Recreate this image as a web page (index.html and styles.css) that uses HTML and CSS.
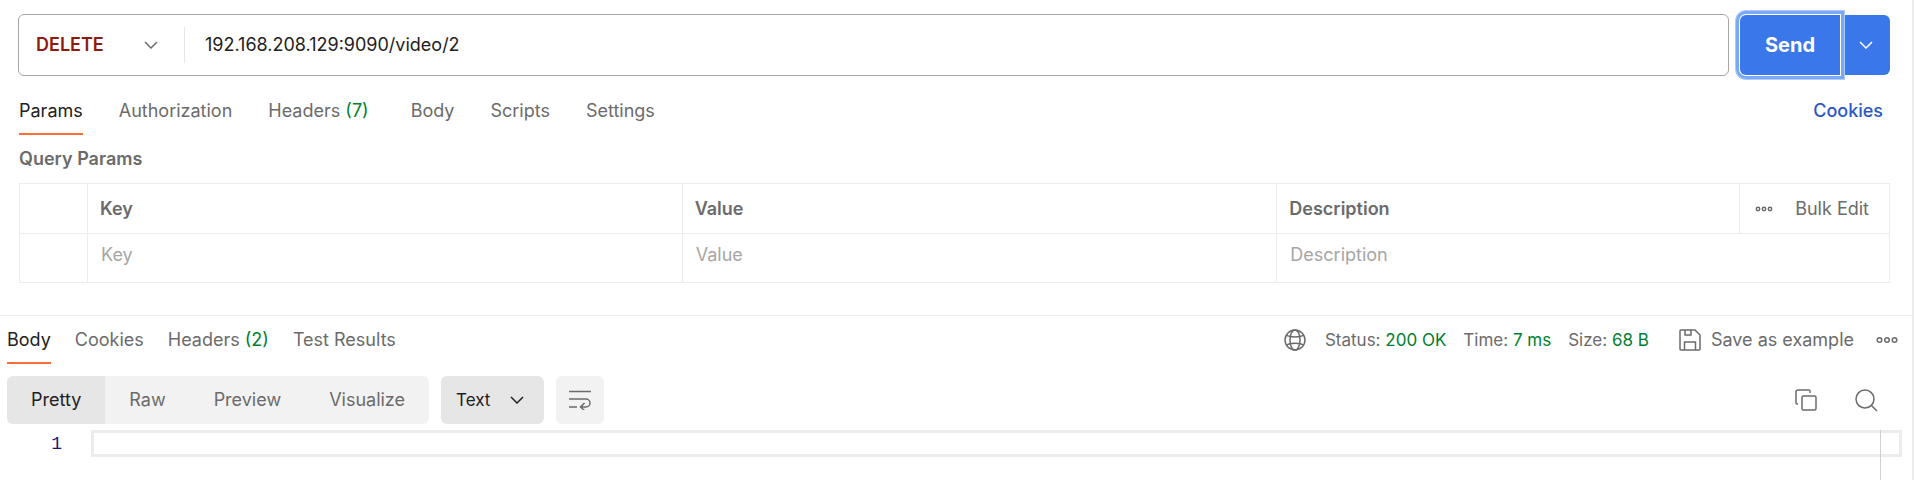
FILE: index.html
```html
<!doctype html>
<html lang="en">
<head>
<meta charset="utf-8">
<title>DELETE 192.168.208.129:9090/video/2</title>
<link rel="stylesheet" href="styles.css">
</head>
<body>
<main class="request">
	<form class="url-bar">
		<div class="url-box">
			<div class="select-wrap method">
				<select aria-label="Method">
					<option>DELETE</option>
				</select>
				<svg class="chevron" width="14" height="8" viewBox="0 0 14 8"><path d="M1 1l6 6 6-6"/></svg>
			</div>
			<input class="url" type="text" aria-label="Request URL" value="192.168.208.129:9090/video/2">
		</div>
		<div class="send-group">
			<button class="send" type="button">Send</button>
			<button class="send-more" type="button" aria-label="Send options">
				<svg width="14" height="8" viewBox="0 0 14 8"><path d="M1 1l6 6 6-6"/></svg>
			</button>
		</div>
	</form>
	<nav class="tabs">
		<a class="tab active" href="#params">Params</a>
		<a class="tab" href="#auth">Authorization</a>
		<a class="tab with-count" href="#headers">Headers <span class="count">(7)</span></a>
		<a class="tab" href="#body">Body</a>
		<a class="tab" href="#scripts">Scripts</a>
		<a class="tab" href="#settings">Settings</a>
		<a class="cookies" href="#cookies">Cookies</a>
	</nav>
	<h2 class="title">Query Params</h2>
	<table class="params">
		<colgroup>
			<col class="col-check">
			<col class="col-key">
			<col class="col-key">
			<col>
			<col class="col-tools">
		</colgroup>
		<thead>
			<tr>
				<th></th>
				<th>Key</th>
				<th>Value</th>
				<th>Description</th>
				<td class="tools">
					<div class="tools-row">
						<button type="button" aria-label="More columns">
							<svg width="18" height="6" viewBox="0 0 18 6"><circle cx="3" cy="3" r="1.7"/><circle cx="9" cy="3" r="1.7"/><circle cx="15" cy="3" r="1.7"/></svg>
						</button>
						<button type="button">Bulk Edit</button>
					</div>
				</td>
			</tr>
		</thead>
		<tbody>
			<tr>
				<td></td>
				<td><input type="text" placeholder="Key" aria-label="Key"></td>
				<td><input type="text" placeholder="Value" aria-label="Value"></td>
				<td colspan="2"><input type="text" placeholder="Description" aria-label="Description"></td>
			</tr>
		</tbody>
	</table>
</main>
<section class="response">
	<div class="response-head">
		<nav class="response-tabs">
			<a class="tab active" href="#res-body">Body</a>
			<a class="tab" href="#res-cookies">Cookies</a>
			<a class="tab" href="#res-headers">Headers <span class="count">(2)</span></a>
			<a class="tab" href="#res-tests">Test Results</a>
		</nav>
		<div class="status">
			<svg class="icon globe" width="22" height="22" viewBox="0 0 22 22"><circle cx="11" cy="11" r="10"/><path d="M11 1c-3 0-5 4.500-5 10s2 10 5 10 5-4.500 5-10-2-10-5-10zM2.500 6c3 2.500 14 2.500 17 0M2.500 16c3-2.500 14-2.500 17 0"/></svg>
			<span>Status: <b>200 OK</b></span>
			<span>Time: <b>7 ms</b></span>
			<span>Size: <b>68 B</b></span>
		</div>
		<button class="save" type="button">
			<svg class="icon" width="22" height="22" viewBox="0 0 22 22"><path d="M2 1h14l5 5v14a1 1 0 0 1-1 1H2a1 1 0 0 1-1-1V2a1 1 0 0 1 1-1zM6 1v5h6V1M5.500 21v-8h11v8"/></svg>
			Save as example
		</button>
		<button class="more" type="button" aria-label="More actions">
			<svg class="icon dots" width="22" height="8" viewBox="0 0 22 8"><circle cx="3.500" cy="4" r="2.300"/><circle cx="11" cy="4" r="2.300"/><circle cx="18.500" cy="4" r="2.300"/></svg>
		</button>
	</div>
	<div class="toolbar">
		<div class="views">
			<button class="active" type="button">Pretty</button>
			<button type="button">Raw</button>
			<button type="button">Preview</button>
			<button type="button">Visualize</button>
		</div>
		<div class="select-wrap format">
			<select aria-label="Format">
				<option>Text</option>
			</select>
			<svg class="chevron" width="14" height="8" viewBox="0 0 14 8"><path d="M1 1l6 6 6-6"/></svg>
		</div>
		<button class="wrap" type="button" aria-label="Wrap lines">
			<svg class="icon" width="22" height="20" viewBox="0 0 22 20"><path d="M0 1.500h22M0 9h17a4 4 0 0 1 0 8h-5M0 17h8M15.500 13l-4 4 4 3.500"/></svg>
		</button>
		<div class="actions">
			<button type="button" aria-label="Copy">
				<svg class="icon" width="22" height="22" viewBox="0 0 22 22"><rect x="7" y="7" width="14" height="14" rx="1.500"/><path d="M15 4V2a1 1 0 0 0-1-1H3a2 2 0 0 0-2 2v11a1 1 0 0 0 1 1h1"/></svg>
			</button>
			<button type="button" aria-label="Search">
				<svg class="icon" width="23" height="23" viewBox="0 0 23 23"><circle cx="10" cy="10" r="9"/><path d="M16.500 16.500l5.500 5.500"/></svg>
			</button>
		</div>
	</div>
	<div class="editor">
		<span class="line-number">1</span>
		<input class="line" type="text" aria-label="Response body" readonly>
	</div>
</section>
</body>
</html>
```
FILE: styles.css
```css
*{
	box-sizing: border-box;
}
body{
	margin: 0;
	min-height: 100vh;
	display: flex;
	flex-direction: column;
	border-right: 2px solid #ececec;
	background-color: #fff;
	color: #6b6b6b;
	font: 18px/24px Inter, "Liberation Sans", sans-serif;
}
button, input, select{
	margin: 0;
	padding: 0;
	border: 0;
	background: none;
	color: inherit;
	font: inherit;
}
button{
	cursor: pointer;
}
input, select{
	outline: none;
}
select{
	appearance: none;
	width: 100%;
}
a{
	color: inherit;
	text-decoration: none;
}
svg{
	display: block;
	flex: none;
	fill: none;
	stroke: currentColor;
	stroke-width: 1.5;
}
.request{
	padding: 14px 22px 0 18px;
}
.url-bar{
	display: flex;
	align-items: center;
	gap: 11px;
}
.url-box{
	flex: 1;
	display: flex;
	align-items: center;
	height: 62px;
	border: 1px solid #a6a6a6;
	border-radius: 6px;
}
.select-wrap{
	position: relative;
}
.chevron{
	position: absolute;
	top: 50%;
	margin-top: -4px;
	pointer-events: none;
}
.method{
	width: 166px;
	border-right: 1px solid #e6e6e6;
}
.method select{
	height: 36px;
	padding-left: 17px;
	color: #8e1a10;
	font-weight: 600;
}
.method .chevron{
	right: 26px;
}
.url{
	flex: 1;
	padding: 0 20px;
	color: #212121;
}
.send-group{
	display: flex;
	height: 60px;
	gap: 1px;
	color: #fff;
}
.send{
	position: relative;
	width: 100px;
	background-color: #3a77ea;
	border-radius: 6px 0 0 6px;
	font-size: 20px;
	font-weight: 700;
	box-shadow: 0 0 0 1px #fff, 0 0 0 4px #79a9f5, 0 0 0 5px #afcbf8;
}
.send-more{
	display: flex;
	align-items: center;
	justify-content: center;
	width: 49px;
	background-color: #3a77ea;
	border-radius: 0 6px 6px 0;
}
.tabs{
	display: flex;
	gap: 36px;
	margin-top: 23px;
	padding: 0 7px 0 1px;
}
.tab{
	padding-bottom: 10px;
	border-bottom: 2px solid transparent;
	white-space: nowrap;
}
.tab.active{
	color: #212121;
	border-color: #ff6c37;
}
.with-count{
	margin-right: 6px;
}
.count{
	color: #007f31;
}
.cookies{
	margin-left: auto;
	color: #2b57c9;
	font-weight: 500;
}
.title{
	margin: 12px 0 12px 1px;
	font-size: 18px;
	font-weight: 600;
}
.params{
	width: calc(100% - 1px);
	margin-left: 1px;
	table-layout: fixed;
	border-collapse: collapse;
}
.params th, .params td{
	height: 49px;
	padding: 0 12px;
	border: 1px solid #ececec;
	text-align: left;
	font-weight: 600;
}
.params thead th{
	height: 50px;
	padding-top: 1px;
}
.params td{
	padding: 0 13px;
	font-weight: 400;
}
.params tbody td{
	padding-bottom: 6px;
}
.params input{
	display: block;
	width: 100%;
}
input::placeholder{
	color: #a6a6a6;
	opacity: 1;
}
.col-check{
	width: 68px;
}
.col-key{
	width: 31.8%;
}
.col-tools{
	width: 150px;
}
.tools-row{
	display: flex;
	align-items: center;
	justify-content: space-between;
	padding: 0 7px 0 2px;
}
.response{
	flex: 1;
	display: flex;
	flex-direction: column;
	margin-top: 32px;
	border-top: 1px solid #ececec;
}
.response-head{
	display: flex;
	align-items: flex-start;
	padding: 12px 14px 0 7px;
}
.response-tabs{
	flex: 1;
	display: flex;
	gap: 24px;
}
.status{
	display: flex;
	align-items: center;
	gap: 17px;
	font-size: 17px;
}
.status b{
	color: #007f31;
	font-weight: 400;
}
.icon{
	stroke: #6b6b6b;
}
.globe{
	margin-right: 2px;
}
.save{
	display: flex;
	align-items: center;
	gap: 10px;
	margin: 0 22px 0 30px;
}
.more{
	padding: 8px 0;
}
.toolbar{
	display: flex;
	gap: 12px;
	height: 48px;
	margin-top: 12px;
	padding: 0 34px 0 7px;
}
.views{
	display: flex;
	overflow: hidden;
	background-color: #f2f2f2;
	border-radius: 6px;
}
.views button{
	padding: 0 24px;
}
.views .active{
	background-color: #e6e6e6;
	color: #212121;
}
.format{
	width: 103px;
	background-color: #e6e6e6;
	border-radius: 6px;
	color: #212121;
}
.format select{
	height: 48px;
	padding-left: 15px;
	font-size: 17px;
}
.format .chevron{
	right: 20px;
}
.wrap{
	display: flex;
	align-items: center;
	justify-content: center;
	width: 48px;
	background-color: #f2f2f2;
	border-radius: 6px;
}
.actions{
	display: flex;
	gap: 38px;
	margin-left: auto;
}
.editor{
	position: relative;
	flex: 1;
	display: flex;
	align-items: flex-start;
	margin: 6px 10px 0 0;
}
/* overview ruler at the right of the editor */
.editor::after{
	content: "";
	position: absolute;
	top: 0;
	right: 0;
	bottom: 0;
	width: 21px;
	border-left: 1px solid #d0d0d0;
	pointer-events: none;
}
.line-number{
	width: 91px;
	padding-right: 29px;
	color: #1a1a7a;
	font: 18px/28px "Liberation Mono", monospace;
	text-align: right;
}
.line{
	flex: 1;
	height: 27px;
	border: 3px solid #ececec;
}
```
